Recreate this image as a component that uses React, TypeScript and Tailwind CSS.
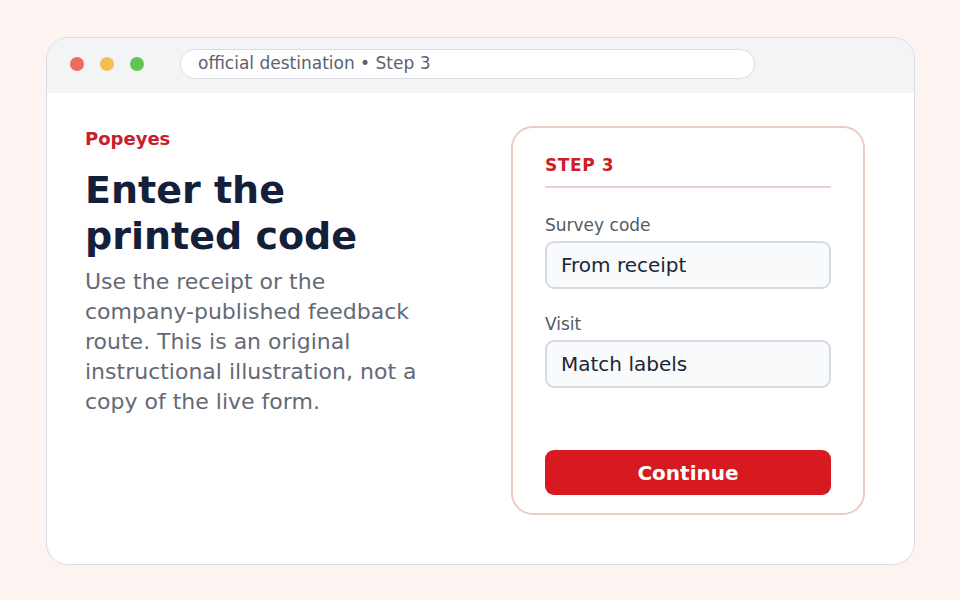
export default function App() {
  const font = { fontFamily: '"DejaVu Sans", "Noto Sans", sans-serif' };

  return (
    <div className="w-[960px] h-[600px] bg-[#fdf4f2] pt-[37px] pl-[46px]" style={font}>
      <div className="w-[869px] h-[528px] rounded-[22px] border border-[#d8dce5] bg-white overflow-hidden flex flex-col">
        {/* title bar */}
        <div className="h-[55px] shrink-0 bg-[#f3f4f6] flex items-center pl-[23px] pb-[3px]">
          <div className="flex gap-[16px]">
            <span className="w-[14px] h-[14px] rounded-full bg-[#ec6a5e]" />
            <span className="w-[14px] h-[14px] rounded-full bg-[#f4bf4f]" />
            <span className="w-[14px] h-[14px] rounded-full bg-[#61c554]" />
          </div>
          <div className="ml-[36px] w-[575px] h-[30px] rounded-full bg-white border border-[#d9dce2] flex items-center pl-[17px] text-[17px] text-[#5b6270]">
            official destination • Step 3
          </div>
        </div>

        {/* body */}
        <div className="flex flex-1 pl-[38px] pt-[33px] pr-[49px]">
          <div className="w-[350px]">
            <div className="text-[18px] leading-[22px] font-bold text-[#c8202a] mt-[2px]">Popeyes</div>
            <h1 className="mt-[17px] text-[38px] leading-[46px] font-bold text-[#142039]">
              Enter the printed code
            </h1>
            <p className="mt-[8px] text-[22px] leading-[30px] text-[#646a75]">
              Use the receipt or the company-published feedback route. This is an original instructional illustration, not a copy of the live form.
            </p>
          </div>

          <div className="ml-auto w-[354px] h-[389px] rounded-[22px] border-2 border-[#efcbc6] px-[32px] pt-[25px]">
            <div className="text-[17px] leading-[24px] font-bold tracking-[0.6px] text-[#cf1d25] pb-[9px] border-b-2 border-[#ecd0ca]">
              STEP 3
            </div>
            <div className="mt-[26px] text-[17px] leading-[22px] text-[#525a66]">Survey code</div>
            <div className="mt-[5px] h-[48px] rounded-[9px] border-2 border-[#d5dae3] bg-[#f8fafc] flex items-center pl-[14px] text-[20px] text-[#1e2636]">
              From receipt
            </div>
            <div className="mt-[24px] text-[17px] leading-[22px] text-[#525a66]">Visit</div>
            <div className="mt-[5px] h-[48px] rounded-[9px] border-2 border-[#d5dae3] bg-[#f8fafc] flex items-center pl-[14px] text-[20px] text-[#1e2636]">
              Match labels
            </div>
            <button className="mt-[62px] w-full h-[45px] rounded-[9px] bg-[#d71920] text-white text-[20px] font-bold flex items-center justify-center">
              Continue
            </button>
          </div>
        </div>
      </div>
    </div>
  );
}
